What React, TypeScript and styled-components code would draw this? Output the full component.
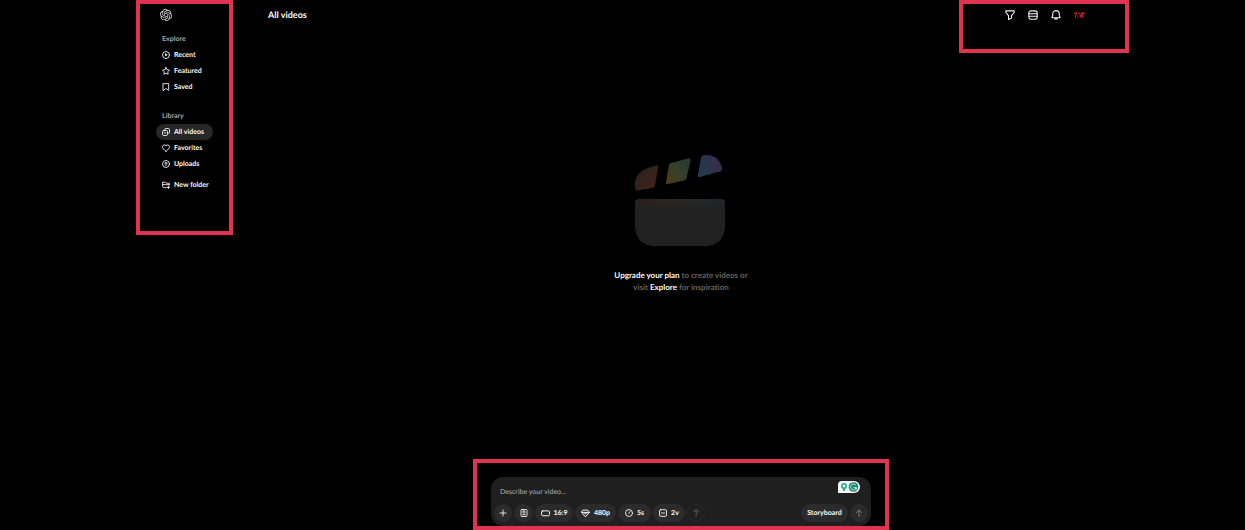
import React from "react";
import styled, { createGlobalStyle } from "styled-components";
import { SiOpenai } from "react-icons/si";

const GlobalStyle = createGlobalStyle`
  * { box-sizing: border-box; }
  body { margin: 0; background: #000; }
  body, button, input {
    font-family: Lato, "Open Sans", sans-serif;
    font-variant-ligatures: none;
    color: #fafafa;
    text-rendering: geometricPrecision;
  }
  button { border: 0; margin: 0; padding: 0; background: none; cursor: pointer; }
  a { color: inherit; text-decoration: none; }
  svg { display: block; flex: none; }
`;

const Page = styled.div`
  display: flex;
  align-items: flex-start;
  min-height: 100vh;
  padding: 0 116px 0 136px;
`;

const Frame = styled.div`
  border: 4px solid #df3350;
`;

const Sidebar = styled(Frame).attrs({ as: "nav" })`
  flex: none;
  width: 97px;
  padding: 5px 16px 38px;
`;

const Logo = styled.a`
  display: block;
  width: 12px;
  margin: 0 0 13px 4px;
  color: #e4e4e4;
`;

const Group = styled.section`
  margin-bottom: 16px;
`;

const LibraryGroup = styled(Group)`
  margin-bottom: 5px;
`;

const GroupTitle = styled.h2`
  margin: 0 0 3px 6px;
  font-size: 7px;
  line-height: 10px;
  font-weight: 700;
  color: #a6a6a6;
`;

const NavItem = styled.a<{ $active?: boolean }>`
  display: flex;
  align-items: center;
  gap: 4px;
  width: 57px;
  height: 16px;
  padding-left: 6px;
  border-radius: 8px;
  font-size: 7px;
  line-height: 10px;
  font-weight: 700;
  white-space: nowrap;
  background: ${(p) => (p.$active ? "#272727" : "transparent")};
`;

const Content = styled.div`
  flex: 1;
  min-width: 0;
  min-height: 100vh;
  display: flex;
  flex-direction: column;
`;

const Header = styled.header`
  display: flex;
  justify-content: space-between;
  align-items: flex-start;
  padding-left: 35px;
`;

const Title = styled.h1`
  margin: 8px 0 0;
  font-size: 9px;
  line-height: 14px;
  font-weight: 700;
`;

const Actions = styled(Frame)`
  display: flex;
  align-items: flex-start;
  gap: 11px;
  width: 170px;
  height: 53px;
  padding: 5px 0 0 41px;
`;

const IconButton = styled.button`
  display: grid;
  place-items: center;
  width: 12px;
  height: 12px;
  color: #f2f2f2;
`;

const Empty = styled.main`
  flex: 1;
  display: flex;
  flex-direction: column;
  align-items: center;
  justify-content: center;
  gap: 22px;
  padding-bottom: 64px;
`;

const Message = styled.p`
  margin: 0;
  font-size: 8px;
  line-height: 12px;
  font-weight: 700;
  text-align: center;
  color: #626262;
`;

const Strong = styled.a`
  color: #fafafa;
`;

const ComposerFrame = styled(Frame)`
  align-self: center;
  width: 416px;
  padding: 14px 14px 0;
`;

const Composer = styled.form`
  display: flex;
  flex-direction: column;
  gap: 3px;
  height: 49px;
  padding: 4px 3px 3px;
  border-radius: 12px;
  background: #1f1f1f;
`;

const PromptRow = styled.div`
  display: flex;
  align-items: flex-start;
  justify-content: space-between;
  height: 20px;
  padding: 0 8px 0 6px;
`;

const Prompt = styled.input`
  flex: 1;
  min-width: 0;
  height: 22px;
  padding: 0;
  border: 0;
  outline: 0;
  background: none;
  font-size: 7px;
  line-height: 22px;
  &::placeholder { color: #b0b0b0; opacity: 1; }
`;

const Assistant = styled.button`
  display: flex;
  width: 22px;
  height: 12px;
`;

const Toolbar = styled.div`
  display: flex;
  align-items: center;
  gap: 2px;
`;

const Spacer = styled.span`
  flex: 1;
`;

const Pill = styled.button<{ $width: number; $muted?: boolean; $outline?: boolean }>`
  display: flex;
  align-items: center;
  justify-content: center;
  gap: 4px;
  width: ${(p) => p.$width}px;
  height: 18px;
  border-radius: 9px;
  border: 1px solid ${(p) => (p.$outline ? "#292929" : "transparent")};
  background: ${(p) => (p.$outline ? "transparent" : "#2b2b2b")};
  color: ${(p) => (p.$muted ? "#858585" : "#fafafa")};
  font-size: 7px;
  line-height: 10px;
  font-weight: 700;
  white-space: nowrap;
`;

const paths: Record<string, React.ReactNode> = {
  recent: <><circle cx="12" cy="12" r="10.500" /><path d="M10.500 9.500v5l4-2.500z" fill="currentColor" /></>,
  star: <path d="M12 1.500l3.200 6.500 7.300 1.200-5.200 5.200 1.200 7.400-6.500-3.400-6.500 3.400 1.200-7.400L1.500 9.200 8.800 8z" />,
  bookmark: <path d="M4 2h16v20l-8-5.500L4 22z" />,
  videos: <><path d="M8 7V5a3.500 3.500 0 0 1 3.500-3.500H19A3.500 3.500 0 0 1 22.500 5v7.500A3.500 3.500 0 0 1 19 16h-2" /><rect x="1.500" y="7.500" width="15" height="15" rx="3.500" /><path d="M6 14.500q3 4 6 0" /></>,
  heart: <path d="M12 22C5 16.500 1.500 12.500 1.500 8A6 6 0 0 1 12 5a6 6 0 0 1 10.500 3c0 4.500-3.500 8.500-10.500 14z" />,
  upload: <><circle cx="12" cy="12" r="10.500" /><path d="M12 17V7.500M8 11l4-4 4 4" /></>,
  folder: <><path d="M12 20H5a3 3 0 0 1-3-3V3.500h7l3 3h10v5M2 11h20" /><path d="M19 15v8M15 19h8" /></>,
  filter: <path d="M2 2h20v4l-6.500 7.500v6L8.500 23v-9.500L2 6z" />,
  rows: <><rect x="2" y="2" width="20" height="20" rx="5" /><path d="M2 9h20M2 15h20" /></>,
  bell: <path d="M2 18.500L4 14V9.500a8 8 0 0 1 16 0V14l2 4.500zM8.500 19c.5 4.500 6.500 4.500 7 0" />,
  plus: <path d="M12 3v18M3 12h18" />,
  preset: <><rect x="3" y="1.500" width="18" height="21" rx="2.500" /><rect x="9" y="6" width="6" height="6" rx="1" /><path d="M8 17h8" /></>,
  ratio: <rect x="1.500" y="5" width="21" height="13" rx="3" />,
  gem: <path d="M6 3h12l4.500 6L12 21 1.500 9zM2 9h20M8 9l4 5 4-5" />,
  clock: <><circle cx="12" cy="12" r="10.500" /><path d="M11.500 13L15 7.500" /></>,
  variations: <><rect x="1.500" y="2" width="21" height="20" rx="4" /><path d="M7 12h10" /></>,
  help: <path d="M7 8c0-7 11-6 10 0-.6 3.500-5 3.500-5 7.500M12 20.500v1" />,
  arrow: <path d="M12 22V3M4 11l8-8 8 8" />,
};

const Icon = ({ name, size = 8 }: { name: string; size?: number }) => (
  <svg width={size} height={size} viewBox="0 0 24 24" fill="none" stroke="currentColor" strokeWidth={2.6} strokeLinejoin="round" strokeLinecap="round" aria-hidden="true">
    {paths[name]}
  </svg>
);

const Clapper = () => (
  <svg width="92" height="92" viewBox="1 0 92 92" aria-hidden="true" overflow="visible">
    <defs>
      <linearGradient id="left" x1="0" y1="0" x2="1" y2="1">
        <stop offset="0" stopColor="#25201e" /><stop offset="1" stopColor="#46241b" />
      </linearGradient>
      <linearGradient id="middle" x1="0" y1="1" x2="1" y2="0">
        <stop offset="0" stopColor="#51391b" /><stop offset=".5" stopColor="#354027" /><stop offset="1" stopColor="#26363a" />
      </linearGradient>
      <linearGradient id="right" x1="0" y1="1" x2="1" y2="0.600">
        <stop offset="0" stopColor="#203c50" /><stop offset="1" stopColor="#352d49" />
      </linearGradient>
      <linearGradient id="glow">
        <stop offset="0" stopColor="#291f1d" /><stop offset=".3" stopColor="#38241d" /><stop offset=".55" stopColor="#2b2b20" /><stop offset=".8" stopColor="#1c2d33" /><stop offset="1" stopColor="#232329" />
      </linearGradient>
      <linearGradient id="fade" x1="0" y1="0" x2="0" y2="1">
        <stop offset="0" stopColor="#212121" stopOpacity="0.200" /><stop offset=".22" stopColor="#212121" />
      </linearGradient>
    </defs>
    <g transform="translate(0 -1)">
      <path d="M1 34C-1 22 8 15 17 13l5-1.500c2-.5 2.500 .5 2.100 2.500L21 31c-.4 2-1 2.500-3 3L4 36.500c-1.500.4-2.600-.5-3-2.500z" fill="url(#left)" />
      <path d="M37 9l17-4.500c2-.5 3 .5 2.500 2.500l-4 17c-.4 1.500-1 2-2.500 2.400L34 30c-1.700.4-2.500-.5-2-2l3-17c.3-1.300.8-1.700 2-2z" fill="url(#middle)" />
      <path d="M69 1.500c10-2 17 3.500 19 12.500 .4 2-.3 3-2 3.500L66 23c-1.700.4-2.500-.5-2-2l3-17c.3-1.800.7-2.100 2-2.500z" fill="url(#right)" />
    </g>
    <path d="M5 44h82q4 0 4 4v21q0 22-22 22H23Q1 91 1 69V48q0-4 4-4z" fill="url(#glow)" />
    <path d="M5 44h82q4 0 4 4v21q0 22-22 22H23Q1 91 1 69V48q0-4 4-4z" fill="url(#fade)" />
  </svg>
);

const AssistantBadge = () => (
  <svg width="22" height="12" viewBox="0 0 22 12" aria-hidden="true">
    <path d="M4 0h12a6 6 0 0 1 0 12H0V4a4 4 0 0 1 4-4z" fill="#f3f8f7" />
    <circle cx="6" cy="5" r="2.200" fill="none" stroke="#22a688" strokeWidth="1.500" />
    <path d="M6 7v3" stroke="#22a688" strokeWidth="1.800" />
    <circle cx="15.500" cy="6" r="4.800" fill="#15866f" />
    <path d="M17.700 4.100A2.900 2.900 0 1 0 18.300 6.700H15.500M18.300 6.500v2.200" fill="none" stroke="#e4f3ef" strokeWidth=".9" />
  </svg>
);

const Profile = () => (
  <svg width="12" height="12" viewBox="0 0 12 12" fill="none" stroke="#ed2432" strokeWidth="1.100" aria-hidden="true">
    <path d="M1 4h2.400L2.200 8.500M4.500 8.200h1M5.800 3.500L6.500 5.500M8.800 3.500L7 8.500M9 4h3M10.200 4L9.200 8.500" />
  </svg>
);

const NavLink = ({ icon, label, active }: { icon: string; label: string; active?: boolean }) => (
  <NavItem href="#" $active={active} aria-current={active ? "page" : undefined}>
    <Icon name={icon} />
    {label}
  </NavItem>
);

export default function App() {
  return (
    <>
      <GlobalStyle />
      <Page>
        <Sidebar aria-label="Main">
          <Logo href="#" aria-label="Home"><SiOpenai size={12} /></Logo>
          <Group>
            <GroupTitle>Explore</GroupTitle>
            <NavLink icon="recent" label="Recent" />
            <NavLink icon="star" label="Featured" />
            <NavLink icon="bookmark" label="Saved" />
          </Group>
          <LibraryGroup>
            <GroupTitle>Library</GroupTitle>
            <NavLink icon="videos" label="All videos" active />
            <NavLink icon="heart" label="Favorites" />
            <NavLink icon="upload" label="Uploads" />
          </LibraryGroup>
          <NavLink icon="folder" label="New folder" />
        </Sidebar>
        <Content>
          <Header>
            <Title>All videos</Title>
            <Actions>
              <IconButton aria-label="Filter"><Icon name="filter" size={10} /></IconButton>
              <IconButton aria-label="View"><Icon name="rows" size={10} /></IconButton>
              <IconButton aria-label="Notifications"><Icon name="bell" size={10} /></IconButton>
              <IconButton aria-label="Profile"><Profile /></IconButton>
            </Actions>
          </Header>
          <Empty>
            <Clapper />
            <Message>
              <Strong href="#">Upgrade your plan</Strong> to create videos or
              <br />
              visit <Strong href="#">Explore</Strong> for inspiration
            </Message>
          </Empty>
          <ComposerFrame>
            <Composer onSubmit={(e) => e.preventDefault()}>
              <PromptRow>
                <Prompt aria-label="Describe your video" placeholder="Describe your video..." />
                <Assistant type="button" aria-label="Writing assistant"><AssistantBadge /></Assistant>
              </PromptRow>
              <Toolbar>
                <Pill type="button" $width={18} aria-label="Add"><Icon name="plus" /></Pill>
                <Pill type="button" $width={19} aria-label="Presets"><Icon name="preset" /></Pill>
                <Pill type="button" $width={38}><Icon name="ratio" size={9} />16:9</Pill>
                <Pill type="button" $width={41}><Icon name="gem" size={9} />480p</Pill>
                <Pill type="button" $width={33}><Icon name="clock" />5s</Pill>
                <Pill type="button" $width={32}><Icon name="variations" />2v</Pill>
                <Pill type="button" $width={18} $muted $outline aria-label="Help"><Icon name="help" /></Pill>
                <Spacer />
                <Pill type="button" $width={47}>Storyboard</Pill>
                <Pill type="submit" $width={18} $muted aria-label="Send"><Icon name="arrow" /></Pill>
              </Toolbar>
            </Composer>
          </ComposerFrame>
        </Content>
      </Page>
    </>
  );
}
